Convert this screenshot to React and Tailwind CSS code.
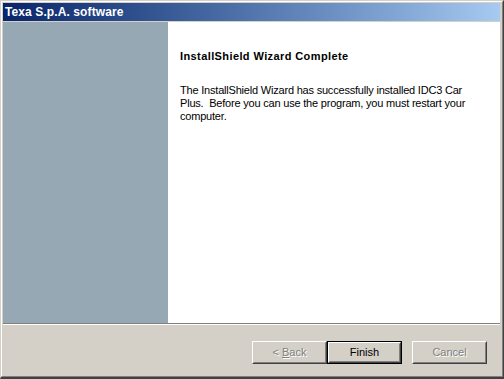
import React from 'react'

const font = { fontFamily: '"Liberation Sans", Arial, sans-serif' }

const Button = ({ children, disabled, primary }) => {
    if (primary) {
        return (
            <div className="w-[75px] h-[23px] border border-black">
                <div className="w-full h-full border border-t-white border-l-white border-r-[#404040] border-b-[#404040]">
                    <div className="w-full h-full border border-t-[#d4d0c8] border-l-[#d4d0c8] border-r-[#808080] border-b-[#808080] flex items-center justify-center text-[11px] text-black">
                        {children}
                    </div>
                </div>
            </div>
        )
    }
    return (
        <div className="w-[75px] h-[23px] border border-t-white border-l-white border-r-[#404040] border-b-[#404040]">
            <div
                className={`w-full h-full border border-t-[#d4d0c8] border-l-[#d4d0c8] border-r-[#808080] border-b-[#808080] flex items-center justify-center text-[11px] ${
                    disabled ? 'text-[#808080] [text-shadow:1px_1px_0_#ffffff]' : 'text-black'
                }`}
            >
                {children}
            </div>
        </div>
    )
}

export default function App() {
    return (
        <div style={font} className="w-[504px] h-[379px] bg-[#d4d0c8]">
            <div className="w-full h-full flex flex-col border-t border-l border-r border-b-2 border-t-[#d4d0c8] border-l-[#d4d0c8] border-r-[#404040] border-b-[#404040]">
                <div className="flex-1 flex flex-col border border-t-white border-l-white border-r-[#808080] border-b-[#808080] pt-[1px] pl-[1px] pr-[2px]">
                    {/* Title bar */}
                    <div className="h-[18px] flex items-center pl-[2px] bg-gradient-to-r from-[#0a246a] to-[#a6caf0]">
                        <span className="text-white font-bold text-[12px] tracking-[0.1px]">Texa S.p.A. software</span>
                    </div>

                    {/* Body */}
                    <div className="mt-[1px] h-[301px] flex">
                        <div className="w-[165px] bg-[#97a8b5]" />
                        <div className="flex-1 bg-white pl-[12px] pr-[20px] pt-[28px] text-[11px] leading-[13px] text-black">
                            <div className="font-bold tracking-[0.4px]">InstallShield Wizard Complete</div>
                            <p className="mt-[21px] tracking-[-0.2px]">
                                The InstallShield Wizard has successfully installed IDC3 Car Plus.&nbsp; Before you can use the program, you must restart your computer.
                            </p>
                        </div>
                    </div>

                    {/* Separator */}
                    <div className="h-[1px] bg-[#808080]" />
                    <div className="h-[1px] bg-white" />

                    {/* Buttons */}
                    <div className="flex-1 flex justify-end pt-[16px] pr-[13px]">
                        <Button disabled>
                            &lt; <span className="underline ml-[3px]">B</span>ack
                        </Button>
                        <Button primary>Finish</Button>
                        <div className="ml-[10px]">
                            <Button disabled>Cancel</Button>
                        </div>
                    </div>
                </div>
            </div>
        </div>
    )
}
